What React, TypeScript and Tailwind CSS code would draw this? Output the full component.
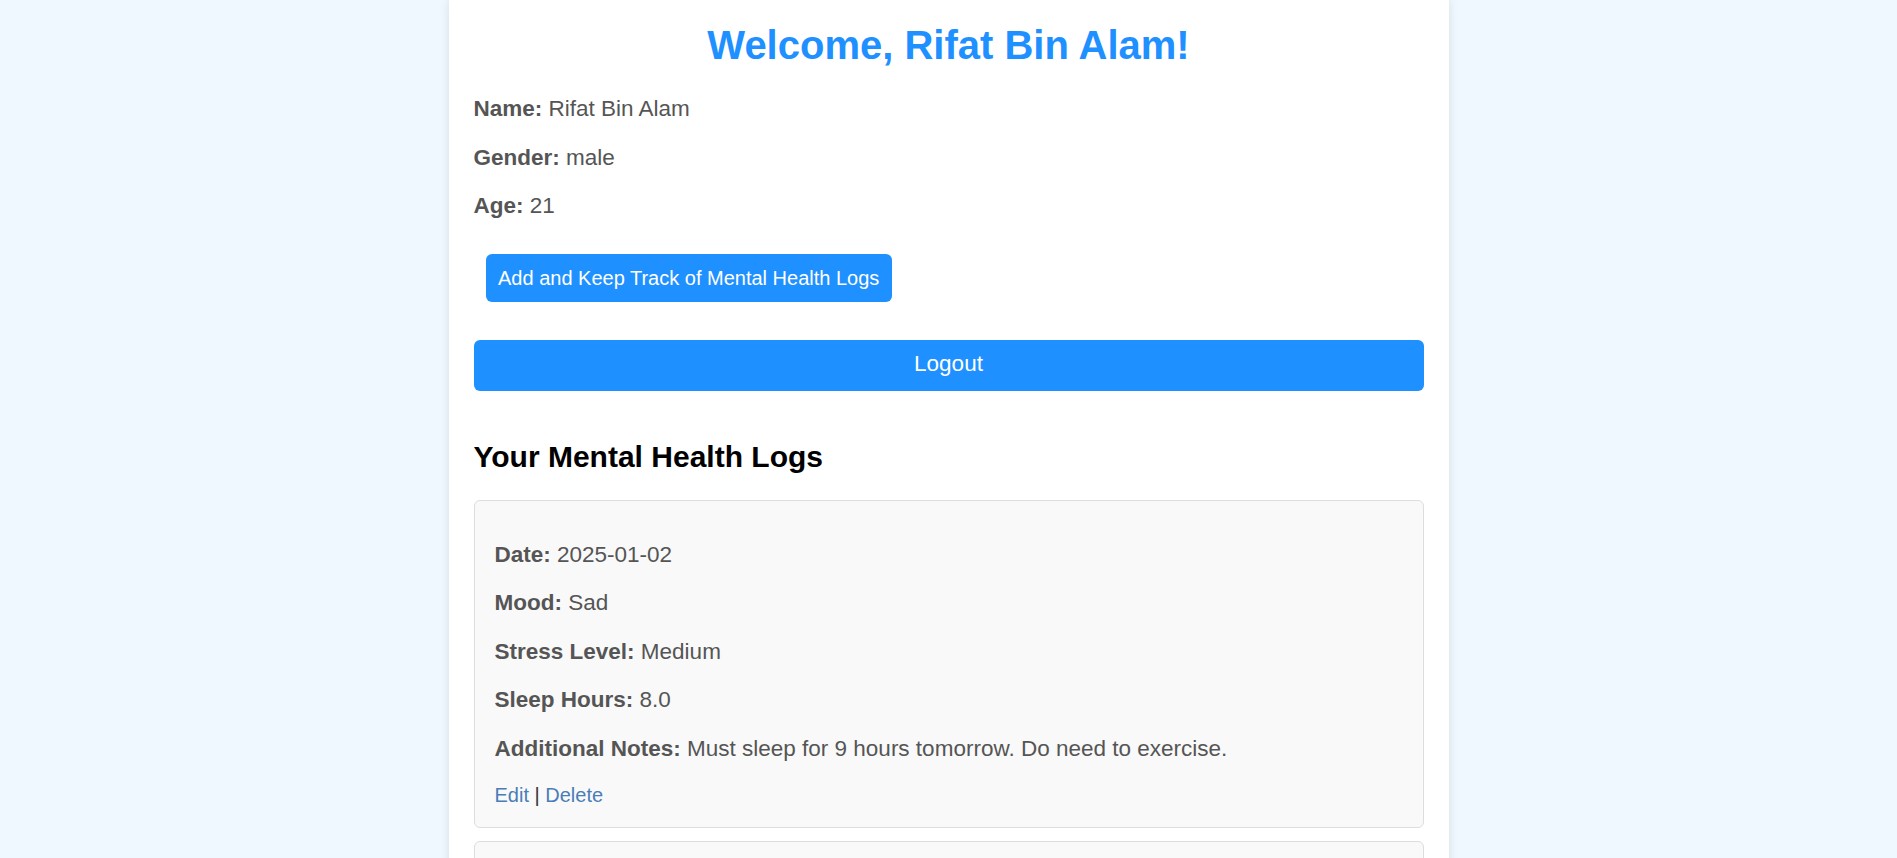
const logs = [
    {
        date: "2025-01-02",
        mood: "Sad",
        stress: "Medium",
        sleep: "8.0",
        notes: "Must sleep for 9 hours tomorrow. Do need to exercise.",
    },
    {
        date: "2025-01-01",
        mood: "Happy",
        stress: "Low",
        sleep: "7.5",
        notes: "Felt good overall.",
    },
];

const LogCard = ({ log, first }: { log: typeof logs[number]; first: boolean }) => (
    <div className={`${first ? "mt-[25px]" : "mt-[13px]"} rounded-[6px] border border-[#ddd] bg-[#f9f9f9] px-[20px] pt-[41px] pb-[20px]`}>
        <div className="flex flex-col gap-[22.5px] text-[22.5px] leading-[26px] text-[#555]">
            <p><strong>Date:</strong> {log.date}</p>
            <p><strong>Mood:</strong> {log.mood}</p>
            <p><strong>Stress Level:</strong> {log.stress}</p>
            <p><strong>Sleep Hours:</strong> {log.sleep}</p>
            <p><strong>Additional Notes:</strong> {log.notes}</p>
        </div>
        <div className="mt-[22px] text-[20px] leading-[23px] text-[#333]">
            <a href="#" className="text-[#4a7db8]">Edit</a> | <a href="#" className="text-[#4a7db8]">Delete</a>
        </div>
    </div>
);

const App = () => {
    return (
        <div className="min-h-screen bg-[#f0f8ff] font-['Liberation_Sans',Arial,sans-serif]">
            <div className="mx-auto min-h-screen w-[1000px] bg-white px-[25px] pt-[22px] pb-[25px] shadow-[0_0_10px_rgba(0,0,0,0.1)]">
                <h1 className="text-center text-[40px] leading-[46px] font-bold text-[#1e90ff]">Welcome, Rifat Bin Alam!</h1>

                {/* Profile */}
                <div className="mt-[28px] flex flex-col gap-[22.5px] text-[22.5px] leading-[26px] text-[#555]">
                    <p><strong>Name:</strong> Rifat Bin Alam</p>
                    <p><strong>Gender:</strong> male</p>
                    <p><strong>Age:</strong> 21</p>
                </div>

                <button className="mt-[35px] ml-[12px] h-[48px] rounded-[6px] bg-[#1e90ff] px-[12.5px] text-[20px] text-white">
                    Add and Keep Track of Mental Health Logs
                </button>

                <button className="mt-[38px] block h-[51px] w-full rounded-[6px] bg-[#1e90ff] pb-[3px] text-[22.5px] text-white">
                    Logout
                </button>

                <h2 className="mt-[49px] text-[30px] leading-[34.5px] font-bold text-black">Your Mental Health Logs</h2>

                {logs.map((log, i) => (
                    <LogCard key={log.date} log={log} first={i === 0} />
                ))}
            </div>
        </div>
    );
};

export default App;
